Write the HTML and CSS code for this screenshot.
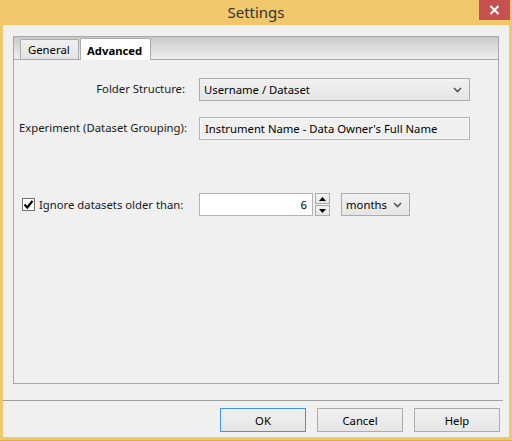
FILE: index.html
```html
<!DOCTYPE html>
<html>
<head>
<meta charset="utf-8">
<link rel="stylesheet" href="styles.css">
</head>
<body>
<div class="window">
  <div class="titlebar">
    <span class="title">Settings</span>
    <div class="close"><svg width="11" height="10" viewBox="0 0 11 10"><path d="M1.5 1 L9.5 9 M9.5 1 L1.5 9" stroke="#fff" stroke-width="2"/></svg></div>
  </div>
  <div class="client">
    <div class="tabctl">
      <div class="tabstrip">
        <div class="tab">General</div>
        <div class="tab active">Advanced</div>
      </div>
      <div class="panel">
        <div class="form">
          <div class="lbl right">Folder Structure:</div>
          <div class="select wide"><span>Username / Dataset</span><svg class="chev" width="9" height="6" viewBox="0 0 9 6"><path d="M1 1 L4.5 4.5 L8 1" stroke="#555" stroke-width="1.6" fill="none"/></svg></div>
          <div class="lbl">Experiment (Dataset Grouping):</div>
          <div class="textbox">Instrument Name - Data Owner's Full Name</div>
        </div>
        <div class="agerow">
          <label class="check"><span class="box"><svg width="11" height="11" viewBox="0 0 11 11"><path d="M1.5 5.5 L4.3 8.5 L9.5 1.8" stroke="#000" stroke-width="2.2" fill="none"/></svg></span>Ignore datasets older than:</label>
          <div class="numbox">6</div>
          <div class="spin">
            <div class="sbtn"><svg width="7" height="4" viewBox="0 0 7 4"><path d="M0 4 L3.5 0 L7 4Z" fill="#000"/></svg></div>
            <div class="sbtn"><svg width="7" height="4" viewBox="0 0 7 4"><path d="M0 0 L3.5 4 L7 0Z" fill="#000"/></svg></div>
          </div>
          <div class="select small"><span>months</span><svg class="chev" width="9" height="6" viewBox="0 0 9 6"><path d="M1 1 L4.5 4.5 L8 1" stroke="#555" stroke-width="1.6" fill="none"/></svg></div>
        </div>
      </div>
    </div>
    <div class="sep"></div>
    <div class="buttons">
      <div class="btn default">OK</div>
      <div class="btn">Cancel</div>
      <div class="btn">Help</div>
    </div>
  </div>
</div>
</body>
</html>
```
FILE: styles.css
```css
html, body { margin: 0; padding: 0; }
body { font-family: "Noto Sans", sans-serif; font-size: 11.3px; color: #000; }
.window {
  width: 512px; height: 441px; background: #f0c86b;
  box-sizing: border-box; border-bottom: 1px solid #d9ae52;
  display: flex; flex-direction: column; position: relative;
}
.titlebar { height: 25px; display: flex; align-items: center; justify-content: center; flex: none; }
.title { font-size: 15px; color: #333; margin-top: -2px; }
.close {
  position: absolute; top: 0; left: 479px; width: 31px; height: 20px;
  background: #c75050; display: flex; align-items: center; justify-content: center;
}
.client {
  margin: 0 3px 3px 3px; flex: 1; background: #f0f0f0;
  display: flex; flex-direction: column;
  padding: 11px 0 0 0;
}
.tabctl {
  margin-left: 10px; width: 486px; height: 348px; box-sizing: border-box;
  border: 1px solid #a8a8a8; display: flex; flex-direction: column;
}
.tabstrip {
  height: 23px; flex: none; box-sizing: border-box;
  background: linear-gradient(#c9c9c9, #efefef);
  border-bottom: 1px solid #a8a8a8;
  display: flex; align-items: flex-end; padding-left: 6px;
}
.tab {
  height: 20px; box-sizing: border-box; padding: 0 6px 0 7px;
  border: 1px solid #acacac; border-bottom: none; border-radius: 2px 2px 0 0;
  background: linear-gradient(#f0f0f0, #e3e3e3);
  display: flex; align-items: center; width: 59px; margin-bottom: 0;
}
.tab.active {
  background: #fff; font-weight: bold; height: 22px; width: 71px;
  margin-left: 1px; margin-bottom: -1px; padding-left: 6px; padding-top: 1px;
}
.panel { flex: 1; padding: 18px 0 0 5px; }
.form {
  display: grid; grid-template-columns: 166px 271px; column-gap: 14px; row-gap: 16px;
  align-items: center;
}
.lbl { color: #1a1a1a; white-space: nowrap; margin-top: -2px; }
.lbl.right { text-align: right; }
.select {
  height: 23px; box-sizing: border-box; border: 1px solid #acacac;
  background: linear-gradient(#f2f2f2, #e5e5e5);
  display: flex; align-items: center; justify-content: space-between;
  padding: 0 7px 0 4px;
}
.textbox {
  height: 23px; box-sizing: border-box; border: 1px solid #b5b5b5;
  box-shadow: inset 0 0 0 1px #fafafa; background: #f0f0f0;
  display: flex; align-items: center; padding-left: 5px;
}
.agerow { display: flex; align-items: center; margin-top: 53px; height: 23px; }
.check { display: flex; align-items: center; margin-left: 3px; width: 177px; color: #1a1a1a; }
.box {
  width: 13px; height: 13px; box-sizing: border-box; border: 1px solid #707070;
  background: #fff; display: flex; align-items: center; justify-content: center; margin-right: 4px;
}
.numbox {
  width: 114px; height: 23px; box-sizing: border-box; border: 1px solid #b5b5b5;
  background: #fff; display: flex; align-items: center; justify-content: flex-end; padding-right: 5px;
}
.spin { display: flex; flex-direction: column; gap: 1px; margin-left: 2px; }
.sbtn {
  width: 15px; height: 11px; box-sizing: border-box; border: 1px solid #acacac;
  background: linear-gradient(#f2f2f2, #e5e5e5); display: flex; align-items: center; justify-content: center;
}
.select.small { width: 69px; margin-left: 11px; }
.sep { margin-top: 16px; height: 1px; background: #a0a0a0; width: 500px; }
.buttons { display: flex; justify-content: flex-end; gap: 11px; margin-top: 7px; padding-right: 9px; }
.btn {
  width: 86px; height: 24px; box-sizing: border-box; border: 1px solid #acacac;
  background: linear-gradient(#f0f0f0, #e5e5e5); display: flex; align-items: center; justify-content: center;
}
.btn.default { border-color: #3c96f0; }
```
